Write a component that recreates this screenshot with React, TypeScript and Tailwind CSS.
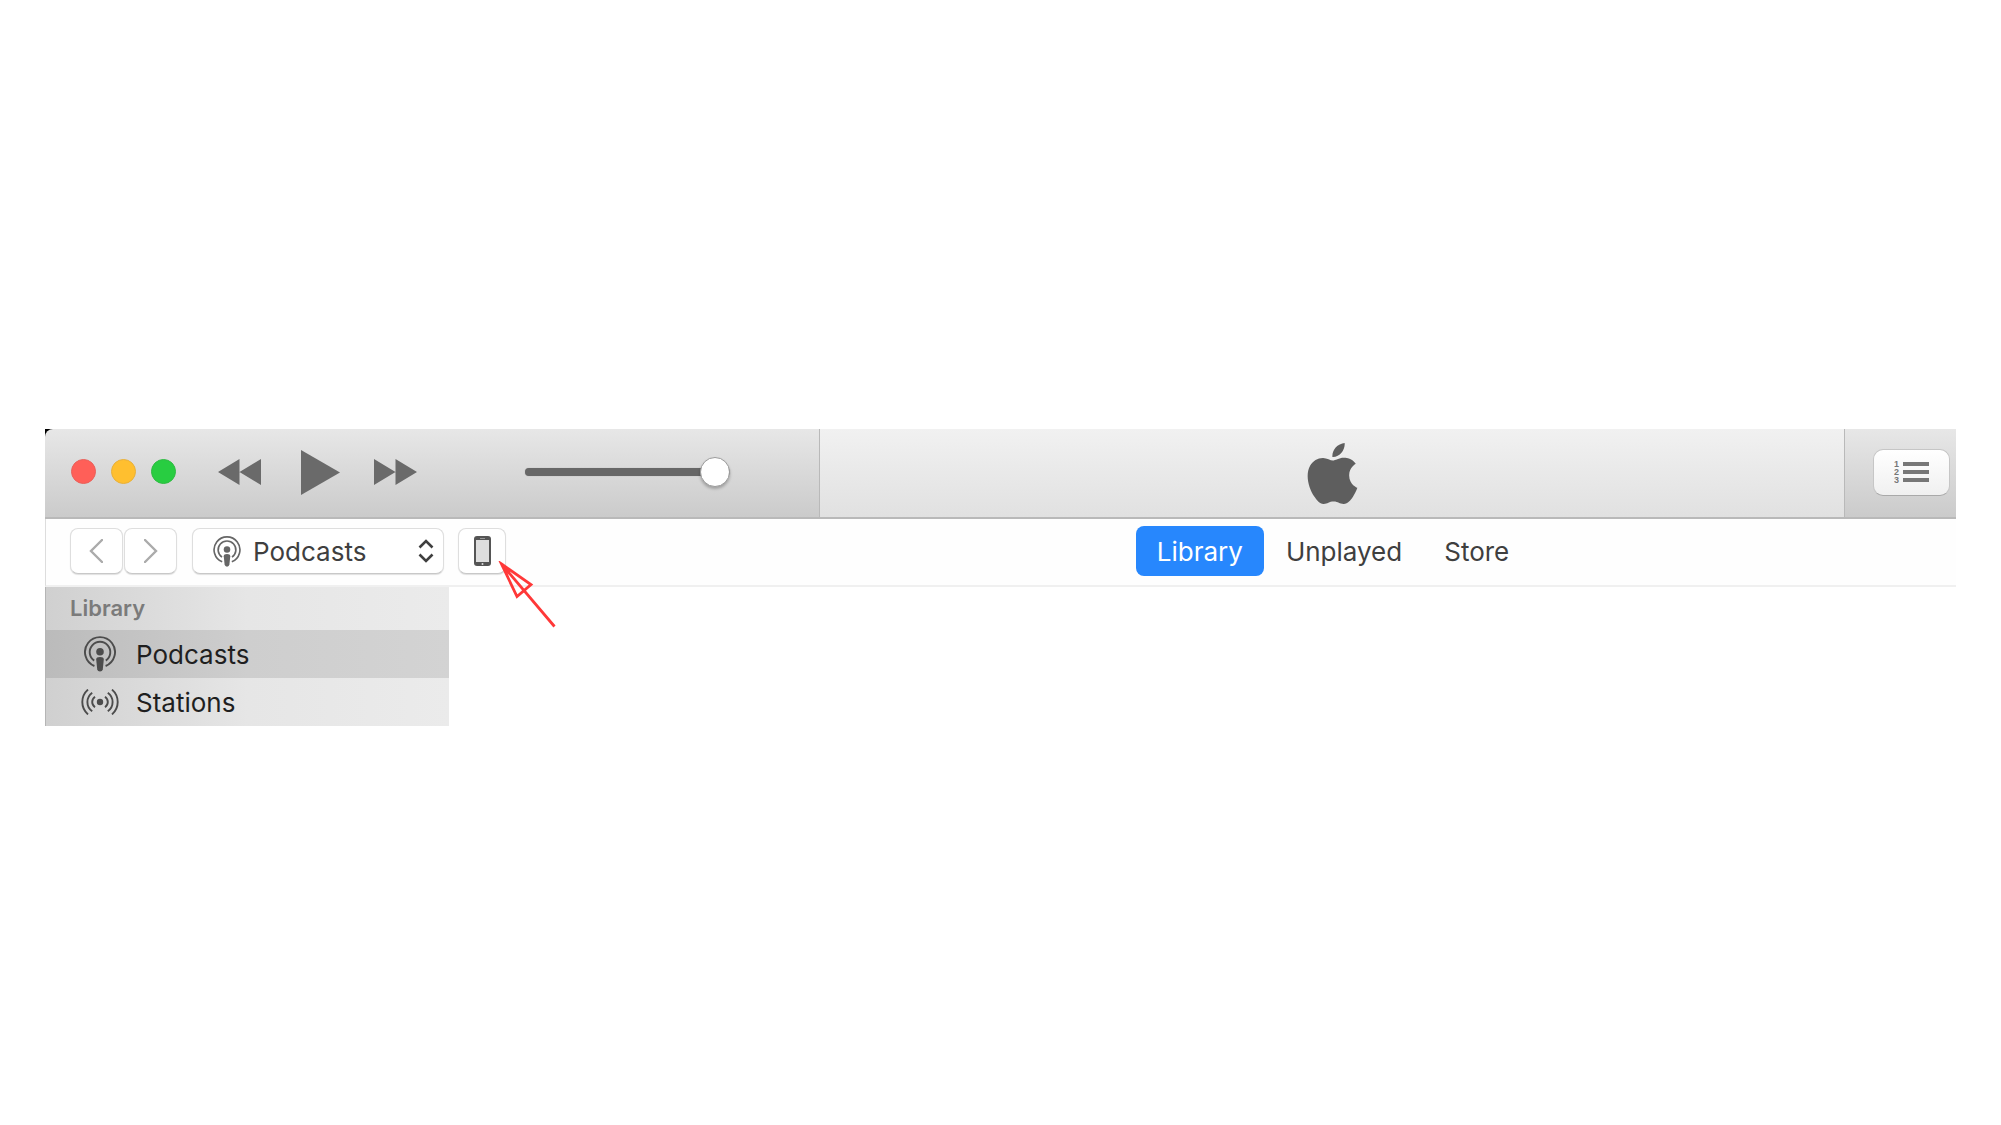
import React from "react";
import { SiApple } from "react-icons/si";

function PodcastIcon({ className }: { className: string }) {
  return (
    <svg viewBox="0 0 32 36" className={className} fill="none" stroke="currentColor" strokeWidth="1.9" aria-hidden="true">
      <path d="M10.4 30A15 15 0 1 1 21.6 30" />
      <path d="M10.2 24.6A10.3 10.3 0 1 1 21.8 24.6" />
      <circle cx="16" cy="15.7" r="3.8" fill="currentColor" stroke="none" />
      <path d="M12.2 23.4Q12.2 21 16 21Q19.8 21 19.8 23.4L18.8 33.2Q18.4 35.6 16 35.6Q13.6 35.6 13.2 33.2Z" fill="currentColor" stroke="none" />
    </svg>
  );
}

function StationsIcon() {
  return (
    <svg viewBox="0 0 38 26" className="h-[26px] w-[38px]" fill="none" stroke="currentColor" strokeWidth="1.9" aria-hidden="true">
      <circle cx="19" cy="13" r="3.2" fill="currentColor" stroke="none" />
      <path d="M7 .6Q1.3 5.600 1.300 13T7 25.400" />
      <path d="M11.200 3.700Q6.400 7.200 6.400 13T11.200 22.300" />
      <path d="M14 7.800Q11.200 9.800 11.200 13T14 18.200" />
      <path d="M31 .6Q36.700 5.600 36.700 13T31 25.400" />
      <path d="M26.800 3.700Q31.600 7.200 31.600 13T26.800 22.300" />
      <path d="M24 7.800Q26.800 9.800 26.800 13T24 18.200" />
    </svg>
  );
}

const smallButton =
  "flex h-[46px] items-center justify-center rounded-lg border border-[#dedede] border-b-[#c8c8c8] bg-white shadow-[0_1px_1px_rgba(0,0,0,0.12)]";

function Header() {
  return (
    <header className="bg-black">
      <div className="grid h-[90px] grid-cols-[774px_1fr_111px] rounded-tl-lg border-b-2 border-[#b9b9b9] bg-linear-to-b from-[#e7e7e7] to-[#cbcbcb]">
        <div className="flex items-center pb-0.5 pl-[26px]">
          <div className="flex gap-[15px] pb-0.5">
            <button aria-label="Close" className="size-[25px] rounded-full border border-[#e9605a] bg-[#ff5f58]" />
            <button aria-label="Minimize" className="size-[25px] rounded-full border border-[#e8b03a] bg-[#ffbf2f]" />
            <button aria-label="Zoom" className="size-[25px] rounded-full border border-[#2ebb42] bg-[#28cd41]" />
          </div>
          <button aria-label="Previous" className="ml-[42px] text-[#6a6a6a]">
            <svg viewBox="0 0 43 26" className="h-[26px] w-[43px]" fill="currentColor">
              <path d="M0 13L21.500 0V26ZM21.500 13L43 0V26Z" />
            </svg>
          </button>
          <button aria-label="Play" className="ml-10 text-[#6a6a6a]">
            <svg viewBox="0 0 39 45" className="h-[45px] w-[39px]" fill="currentColor">
              <path d="M0 0L39 22.500L0 45Z" />
            </svg>
          </button>
          <button aria-label="Next" className="ml-[34px] text-[#6a6a6a]">
            <svg viewBox="0 0 43 26" className="h-[26px] w-[43px]" fill="currentColor">
              <path d="M0 0L21.500 13L0 26ZM21.500 0L43 13L21.500 26Z" />
            </svg>
          </button>
          <input
            type="range"
            aria-label="Volume"
            min={0}
            max={100}
            defaultValue={100}
            className="ml-[108px] h-2 w-[205px] appearance-none rounded-full bg-[#676767] shadow-[0_0_1px_rgba(0,0,0,0.3)] [&::-webkit-slider-thumb]:size-[30px] [&::-webkit-slider-thumb]:appearance-none [&::-webkit-slider-thumb]:rounded-full [&::-webkit-slider-thumb]:border [&::-webkit-slider-thumb]:border-[#9b9b9b] [&::-webkit-slider-thumb]:bg-white [&::-webkit-slider-thumb]:shadow-[0_2px_3px_rgba(0,0,0,0.25)]"
          />
        </div>
        <div className="flex items-center justify-center border-x border-[#b9b9b9] bg-linear-to-b from-[#f1f1f1] to-[#e1e1e1] text-[#5e5e5e]">
          <SiApple className="size-[61px]" aria-label="Apple" />
        </div>
        <div className="flex items-center justify-end pb-0.5 pr-1.5">
          <button
            aria-label="Up Next"
            className="flex h-[47px] w-[77px] items-center justify-center rounded-[10px] border border-[#c6c6c6] border-b-[#a9a9a9] bg-linear-to-b from-white to-[#f0f0f0] text-[#777]"
          >
            <svg viewBox="0 0 35 24" className="h-6 w-[35px]" fill="currentColor" aria-hidden="true">
              <g fontFamily="Liberation Sans" fontWeight="700" fontSize="9">
                <text x="0" y="7">1</text>
                <text x="0" y="15">2</text>
                <text x="0" y="23">3</text>
              </g>
              <path d="M9 2H35V6H9ZM9 10H35V14H9ZM9 18H35V22H9Z" />
            </svg>
          </button>
        </div>
      </div>
    </header>
  );
}

function Toolbar() {
  return (
    <div className="grid h-[68px] grid-cols-[774px_1fr_111px] items-center border-b-2 border-l border-b-[#f0f0f0] border-l-[#dddddd] bg-[#fefefe] pb-0.5 text-[26px] text-[#3f3f3f]">
      <div className="flex items-center pl-6">
        <button aria-label="Back" className={smallButton + " w-[53px] text-[#ababab]"}>
          <svg viewBox="0 0 14 24" className="mr-0.5 h-6 w-3.5" fill="none" stroke="currentColor" strokeWidth="2.400" strokeLinecap="round">
            <path d="M13 1L2 12L13 23" />
          </svg>
        </button>
        <button aria-label="Forward" className={smallButton + " ml-px w-[53px] text-[#ababab]"}>
          <svg viewBox="0 0 14 24" className="h-6 w-3.5" fill="none" stroke="currentColor" strokeWidth="2.400" strokeLinecap="round">
            <path d="M1 1L12 12L1 23" />
          </svg>
        </button>
        <div className="relative ml-[15px] w-[252px]">
          <select aria-label="Media kind" className={smallButton + " w-full appearance-none pl-[60px] pr-10"}>
            <option>Podcasts</option>
          </select>
          <PodcastIcon className="pointer-events-none absolute left-[21px] top-2 h-[31px] w-7 text-[#666]" />
          <svg viewBox="0 0 16 24" className="pointer-events-none absolute right-2.5 top-[11px] h-6 w-4" fill="none" stroke="currentColor" strokeWidth="2.600">
            <path d="M1.500 8.500L8 2L14.500 8.500M1.500 15.500L8 22L14.500 15.500" />
          </svg>
        </div>
        <div className="relative ml-3.5">
          <button aria-label="Device" className={smallButton + " w-12"}>
            <svg viewBox="0 0 17 30" className="h-[30px] w-[17px]" aria-hidden="true">
              <rect width="17" height="30" rx="3" fill="#555" />
              <rect x="2" y="4" width="13" height="22" fill="#dedede" />
              <path d="M6 2H11V3H6Z" fill="#999" />
              <circle cx="8.500" cy="28" r="1" fill="#ddd" />
            </svg>
          </button>
          <svg
            viewBox="0 0 58 67"
            className="pointer-events-none absolute left-10 top-[33px] h-[67px] w-[58px]"
            fill="none"
            stroke="#ff3838"
            strokeWidth="2.800"
            aria-hidden="true"
          >
            <path d="M3.500 3L33 23.500L19 35.500ZM3.500 3L56.500 65.500" />
          </svg>
        </div>
      </div>
      <nav className="flex items-center justify-center">
        <button className="h-[50px] rounded-lg bg-[#2787fd] px-[21px] text-white">Library</button>
        <button className="h-[50px] px-[22px]">Unplayed</button>
        <button className="h-[50px] px-5">Store</button>
      </nav>
    </div>
  );
}

function Sidebar() {
  return (
    <aside className="w-[404px] border-l border-[#b5b5b5] bg-linear-to-r from-[#d0d0d0] via-[#e6e6e6] via-50% to-[#ebebeb] text-[26px] text-[#1f1f1f]">
      <h2 className="flex h-[43px] items-center pl-6 text-[22px] font-semibold text-[#7b7b7b]">Library</h2>
      <ul>
        <li>
          <a href="#podcasts" className="flex h-12 items-center bg-linear-to-r from-[#bbbbbb] via-[#cecece] via-50% to-[#d3d3d3] pl-[35px]">
            <span className="flex w-[38px] justify-center text-[#4c4c4c]">
              <PodcastIcon className="h-9 w-8" />
            </span>
            <span className="ml-[17px]">Podcasts</span>
          </a>
        </li>
        <li>
          <a href="#stations" className="flex h-12 items-center pl-[35px]">
            <span className="flex w-[38px] justify-center text-[#4c4c4c]">
              <StationsIcon />
            </span>
            <span className="ml-[17px]">Stations</span>
          </a>
        </li>
      </ul>
    </aside>
  );
}

export default function App() {
  return (
    <main className="min-h-screen bg-white px-[45px] pt-[429px] font-['Inter',sans-serif]">
      <Header />
      <Toolbar />
      <Sidebar />
    </main>
  );
}
